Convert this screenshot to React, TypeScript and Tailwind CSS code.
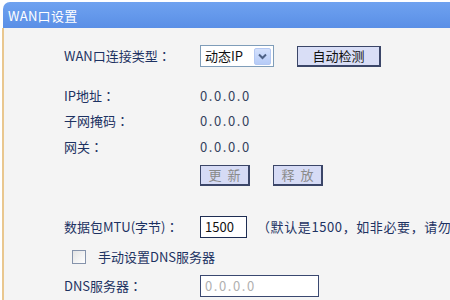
const C = () => <span style={{ fontFamily: '"Noto Sans CJK TC", sans-serif' }}>：</span>;

export default function App() {
  const font = { fontFamily: '"Noto Sans CJK SC", "Liberation Sans", sans-serif' };
  return (
    <div className="w-[450px] h-[300px] overflow-hidden bg-white" style={font}>
      <div className="mt-[2px] ml-[3px] h-[26px] rounded-tl-[7px] bg-gradient-to-b from-[#6fa2f0] to-[#5a8fe6] flex items-center pl-[5px]">
        <span className="text-white text-[13px] leading-none tracking-[0.3px]">WAN口设置</span>
      </div>
      <div className="ml-[2px] h-[272px] border-l-2 border-[#e9c78f] bg-[#f4f4f4] pl-[60px] text-[13px] text-[#1d3262]">
        <div className="pt-[17px] flex items-center h-[39px]">
          <span className="w-[136px] shrink-0">WAN口连接类型<C /></span>
          <div className="h-[22px] w-[74px] bg-white border border-[#7f9db9] flex items-center pl-[4px] pr-[2px] text-[#111]">
            <span className="flex-1">动态IP</span>
            <div className="w-[17px] h-[17px] rounded-[2px] bg-gradient-to-b from-[#d4e1fc] to-[#b6cbf7] border border-[#b4c8f2] flex items-center justify-center">
              <svg width="9" height="7" viewBox="0 0 9 7"><path d="M1 1.5 L4.5 5 L8 1.5" fill="none" stroke="#4d6185" strokeWidth="2" /></svg>
            </div>
          </div>
          <div className="ml-[23px] h-[21px] w-[84px] bg-[#d9def6] border border-[#3b4668] border-r-2 border-b-2 flex items-center justify-center text-[#111] text-[13px]">自动检测</div>
        </div>
        <div className="mt-[18px] h-[22px] flex items-center">
          <span className="w-[136px] shrink-0">IP地址<C /></span>
          <span className="text-[#35425e] tracking-[1.6px]">0.0.0.0</span>
        </div>
        <div className="mt-[3px] h-[22px] flex items-center">
          <span className="w-[136px] shrink-0">子网掩码<C /></span>
          <span className="text-[#35425e] tracking-[1.6px]">0.0.0.0</span>
        </div>
        <div className="mt-[4px] h-[22px] flex items-center">
          <span className="w-[136px] shrink-0">网关<C /></span>
          <span className="text-[#35425e] tracking-[1.6px]">0.0.0.0</span>
        </div>
        <div className="mt-[7px] h-[21px] flex items-center pl-[136px]">
          <div className="h-[21px] w-[50px] bg-[#d6dbf5] border border-[#3b4668] border-r-2 border-b-2 flex items-center justify-center text-[#8a8a8a] tracking-[6px] pl-[6px]">更新</div>
          <div className="ml-[23px] h-[21px] w-[50px] bg-[#d6dbf5] border border-[#3b4668] border-r-2 border-b-2 flex items-center justify-center text-[#8a8a8a] tracking-[6px] pl-[6px]">释放</div>
        </div>
        <div className="mt-[30px] h-[22px] flex items-center whitespace-nowrap">
          <span className="w-[136px] shrink-0">数据包MTU(字节)<C /></span>
          <div className="h-[22px] w-[47px] shrink-0 bg-white border border-[#1e2d52] flex items-center pl-[4px] text-[#111]">1500</div>
          <span className="ml-[10px] tracking-[0.6px]">（默认是1500，如非必要，请勿更改）</span>
        </div>
        <div className="mt-[8px] h-[22px] flex items-center">
          <div className="ml-[8px] w-[14px] h-[14px] border border-[#8593ab] bg-gradient-to-br from-[#e4e4e4] to-white" />
          <span className="ml-[12px]">手动设置DNS服务器</span>
        </div>
        <div className="mt-[7px] h-[22px] flex items-center">
          <span className="w-[136px] shrink-0">DNS服务器<C /></span>
          <div className="h-[22px] w-[119px] bg-white border border-[#3a4870] flex items-center pl-[4px] text-[#b0b0b0] tracking-[1.6px]">0.0.0.0</div>
        </div>
      </div>
    </div>
  );
}
